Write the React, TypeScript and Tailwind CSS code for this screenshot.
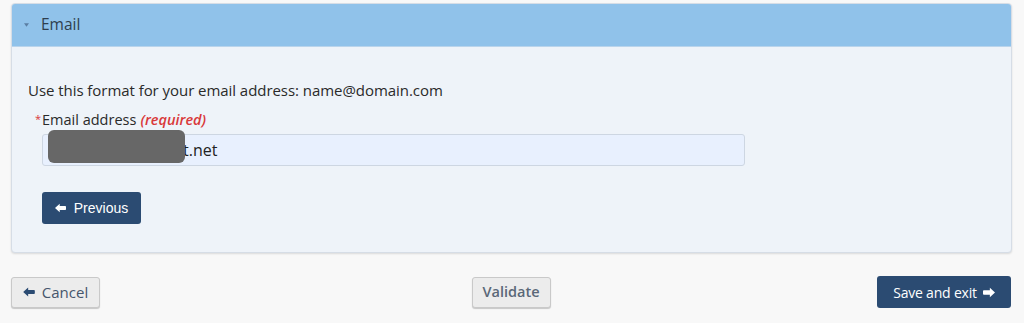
import React from "react";

function ArrowLeft({ className }: { className?: string }) {
  return (
    <svg viewBox="0 0 14 12" className={className} fill="currentColor">
      <path d="M0 6 L6 0.5 L6 3.5 L13 3.5 Q14 3.5 14 4.5 L14 7.5 Q14 8.5 13 8.5 L6 8.5 L6 11.5 Z" />
    </svg>
  );
}

function ArrowRight({ className }: { className?: string }) {
  return (
    <svg viewBox="0 0 14 12" className={className} fill="currentColor">
      <path d="M14 6 L8 0.5 L8 3.5 L1 3.5 Q0 3.5 0 4.5 L0 7.5 Q0 8.5 1 8.5 L8 8.5 L8 11.5 Z" />
    </svg>
  );
}

export default function App() {
  return (
    <div
      className="w-[1024px] h-[323px] bg-[#f8f8f8] pt-[3px] px-[11px] text-[#333]"
      style={{ fontFamily: '"Open Sans", "Noto Sans", sans-serif' }}
    >
      {/* panel */}
      <div className="w-[1001px] rounded-[4px] border border-[#d6dde6] bg-[#eef3f9] shadow-[0_1px_2px_rgba(0,0,0,0.12)] overflow-hidden">
        <div className="h-[43px] bg-[#90c2ea] flex items-center pl-[12px] border-b border-[#b9d4ec]">
          <svg viewBox="0 0 6 4" className="w-[5px] h-[4px] text-[#5b7ea3]" fill="currentColor">
            <path d="M0 0 L6 0 L3 4 Z" />
          </svg>
          <span className="ml-[12px] text-[15.5px] text-[#2f3e4e]">Email</span>
        </div>
        <div className="pl-[16px] pt-[33px] pb-[28px]">
          <p className="text-[15px] leading-[20px] text-[#2a2a2a] tracking-[-0.05px]">
            Use this format for your email address: name@domain.com
          </p>
          <div className="mt-[10px] flex items-center text-[14.5px] leading-[20px] ml-[7px]">
            <span className="text-[#d9383a] text-[11px] self-start mt-[-1px] mr-[1px]">*</span>
            <span className="text-[#2a2a2a]">Email address</span>
            <span className="ml-[4px] italic font-semibold text-[#d9383a]">(required)</span>
          </div>
          <div className="relative mt-[4px] ml-[14px] w-[703px] h-[32px] rounded-[3px] border border-[#cdd6e2] bg-[#e8f0fe] flex items-center pl-[140px] text-[16px] text-[#222]">
            t.net
            <div className="absolute left-[5px] top-[-5px] w-[137px] h-[33px] rounded-[6px] bg-[#676767]" />
          </div>
          <button
            className="mt-[26px] ml-[14px] h-[32px] w-[99px] rounded-[3px] bg-[#2b4b72] text-white text-[14px] flex items-center justify-center gap-[8px]"
            style={{ fontFamily: '"Liberation Sans", Arial, sans-serif' }}
          >
            <ArrowLeft className="w-[11px] h-[10px]" />
            Previous
          </button>
        </div>
      </div>

      {/* footer buttons */}
      <div className="mt-[23px] mr-[2px] flex items-center">
        <div className="flex-1 flex">
          <button className="h-[31px] w-[89px] rounded-[3px] border border-[#c9c9c9] bg-[#ececec] shadow-[0_1px_1px_rgba(0,0,0,0.2)] flex items-center justify-center gap-[7px] text-[15px] text-[#46566c]">
            <ArrowLeft className="w-[12px] h-[10px] text-[#2b4b72]" />
            Cancel
          </button>
        </div>
        <button className="h-[31px] w-[79px] rounded-[3px] border border-[#c9c9c9] bg-[#ececec] shadow-[0_1px_1px_rgba(0,0,0,0.2)] text-[14.5px] font-semibold text-[#5a6878]">
          Validate
        </button>
        <div className="flex-1 flex justify-end">
          <button className="h-[32px] w-[134px] rounded-[3px] bg-[#2b4b72] text-white text-[14px] tracking-[-0.2px] flex items-center justify-center gap-[6px]">
            Save and exit
            <ArrowRight className="w-[12px] h-[11px]" />
          </button>
        </div>
      </div>
    </div>
  );
}
